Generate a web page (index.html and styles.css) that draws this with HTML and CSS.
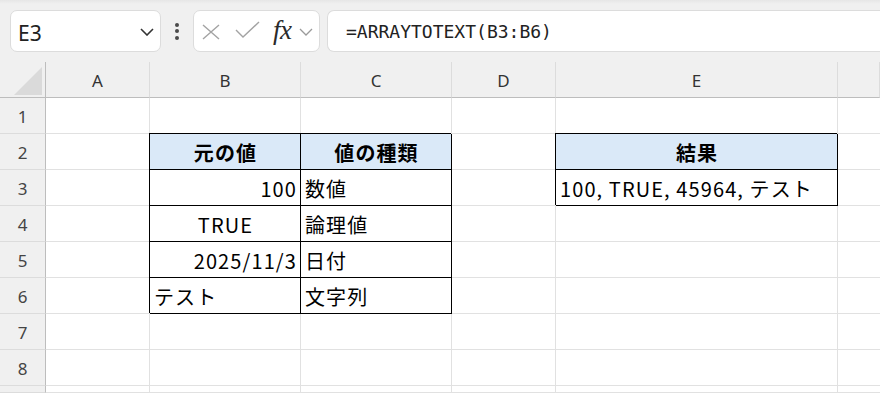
FILE: index.html
```html
<!DOCTYPE html>
<html lang="ja">
<head>
<meta charset="utf-8">
<link rel="stylesheet" href="styles.css">
</head>
<body>
<div class="toolbar">
  <div class="namebox">
    <span class="nb-text">E3</span>
    <svg class="nb-chev" width="14" height="8" viewBox="0 0 14 8"><polyline points="1,1 7,7 13,1" fill="none" stroke="#333" stroke-width="1.6"/></svg>
  </div>
  <div class="dots"><i></i><i></i><i></i></div>
  <div class="fbtns">
    <svg class="ic-x" width="18" height="16" viewBox="0 0 18 16"><path d="M1 1 L17 15 M17 1 L1 15" stroke="#a3a3a3" stroke-width="1.4" fill="none"/></svg>
    <svg class="ic-check" width="25" height="17" viewBox="0 0 25 17"><polyline points="1,9 8,16 24,1" fill="none" stroke="#a3a3a3" stroke-width="1.4"/></svg>
    <span class="fx">fx</span>
    <svg class="ic-chev" width="14" height="8" viewBox="0 0 14 8"><polyline points="1,1 7,7 13,1" fill="none" stroke="#9a9a9a" stroke-width="1.3"/></svg>
  </div>
  <div class="fbar">=ARRAYTOTEXT(B3:B6)</div>
</div>
<div class="sheet">
  <div class="corner"><svg width="28" height="28" viewBox="0 0 28 28"><polygon points="28,0 28,28 0,28" fill="#dadada"/></svg></div>
  <div class="ch">A</div><div class="ch">B</div><div class="ch">C</div><div class="ch">D</div><div class="ch">E</div><div class="ch last"></div>

  <div class="rh">1</div>
  <div class="c"></div><div class="c"></div><div class="c"></div><div class="c"></div><div class="c"></div><div class="c last"></div>

  <div class="rh">2</div>
  <div class="c"></div><div class="c bd hd">元の値</div><div class="c bd hd">値の種類</div><div class="c"></div><div class="c bd hd">結果</div><div class="c last"></div>

  <div class="rh">3</div>
  <div class="c"></div><div class="c bd r">100</div><div class="c bd l">数値</div><div class="c"></div><div class="c bd l">100, TRUE, 45964, テスト</div><div class="c last"></div>

  <div class="rh">4</div>
  <div class="c"></div><div class="c bd m">TRUE</div><div class="c bd l">論理値</div><div class="c"></div><div class="c"></div><div class="c last"></div>

  <div class="rh">5</div>
  <div class="c"></div><div class="c bd r">2025/11/3</div><div class="c bd l">日付</div><div class="c"></div><div class="c"></div><div class="c last"></div>

  <div class="rh">6</div>
  <div class="c"></div><div class="c bd l">テスト</div><div class="c bd l">文字列</div><div class="c"></div><div class="c"></div><div class="c last"></div>

  <div class="rh">7</div>
  <div class="c"></div><div class="c"></div><div class="c"></div><div class="c"></div><div class="c"></div><div class="c last"></div>

  <div class="rh">8</div>
  <div class="c"></div><div class="c"></div><div class="c"></div><div class="c"></div><div class="c"></div><div class="c last"></div>

  <div class="rh"></div>
  <div class="c"></div><div class="c"></div><div class="c"></div><div class="c"></div><div class="c"></div><div class="c last"></div>
</div>
</body>
</html>
```

FILE: styles.css
```css
* { box-sizing: border-box; }
html, body { margin: 0; padding: 0; }
body {
  width: 880px;
  height: 393px;
  overflow: hidden;
  background: #f0f0f0;
  font-family: "Noto Sans", sans-serif;
}
.toolbar {
  height: 62px;
  padding: 10px 0 10px 10px;
  display: flex;
  align-items: stretch;
  background: linear-gradient(#e6e6e6 0px, #f0f0f0 4px);
}
.namebox {
  width: 151px;
  background: #fff;
  border: 1px solid #dcdcdc;
  border-radius: 7px;
  display: flex;
  align-items: center;
  padding: 0 6px 0 7px;
  justify-content: space-between;
}
.nb-text {
  font-size: 21px;
  color: #222;
  margin-top: 3px;
}
.nb-chev { margin-top: 2px; }
.dots {
  width: 32px;
  display: flex;
  flex-direction: column;
  align-items: center;
  justify-content: center;
  gap: 2.5px;
}
.dots i {
  display: block;
  width: 4px;
  height: 4px;
  border-radius: 50%;
  background: #4a4a4a;
}
.fbtns {
  width: 127px;
  background: #fff;
  border: 1px solid #dcdcdc;
  border-radius: 7px;
  display: flex;
  align-items: center;
  padding-left: 8px;
}
.ic-x { margin-top: 1px; }
.ic-check { margin-left: 15px; margin-top: -3px; }
.fx {
  margin-left: 13px;
  font-family: "Liberation Serif", serif;
  font-style: italic;
  font-size: 27px;
  color: #2a2a2a;
  line-height: 1;
  margin-top: -2px;
  letter-spacing: -0.5px;
}
.ic-chev { margin-left: 7px; margin-top: 2px; }
.fbar {
  flex: 1;
  margin-left: 7px;
  background: #fff;
  border: 1px solid #dcdcdc;
  border-right: none;
  border-radius: 7px 0 0 7px;
  display: flex;
  align-items: center;
  padding-left: 18px;
  font-family: "DejaVu Sans Mono", monospace;
  font-size: 18px;
  color: #222;
}
.sheet {
  height: 331px;
  display: grid;
  grid-template-columns: 46px 104px 151px 151px 104px 282px 1fr;
  grid-template-rows: 36px repeat(8, 36px) 1fr;
  background: #fff;
}
.corner {
  background: #f0f0f0;
  border-right: 1px solid #bdbdbd;
  border-bottom: 1px solid #bdbdbd;
  display: flex;
  justify-content: flex-end;
  align-items: flex-end;
  padding: 0 3px 2px 0;
}
.ch {
  background: #f0f0f0;
  border-right: 1px solid #dcdcdc;
  border-bottom: 1px solid #bdbdbd;
  display: flex;
  justify-content: center;
  align-items: center;
  font-size: 17px;
  color: #333;
  padding-top: 1px;
}
.rh {
  background: #f0f0f0;
  border-right: 1px solid #bdbdbd;
  border-bottom: 1px solid #dcdcdc;
  display: flex;
  justify-content: center;
  align-items: center;
  font-size: 17px;
  color: #444;
  padding-top: 2px;
}
.c {
  border-right: 1px solid #e1e1e1;
  border-bottom: 1px solid #e1e1e1;
  display: flex;
  align-items: center;
  font-family: "Noto Sans CJK JP", sans-serif;
  font-size: 20px;
  letter-spacing: 1.1px;
  color: #000;
  white-space: nowrap;
  padding-top: 1px;
}
.c.last { border-right: none; }
.c.bd {
  border-right-color: #000;
  border-bottom-color: #000;
  box-shadow: -1px -1px 0 0 #000;
}
.c.hd {
  background: #dae9f8;
  font-weight: 700;
  justify-content: center;
  padding-left: 1px;
}
.c.r { justify-content: flex-end; padding-right: 3px; }
.c.l { justify-content: flex-start; padding-left: 4px; }
.c.m { justify-content: center; padding-left: 1px; }
```
